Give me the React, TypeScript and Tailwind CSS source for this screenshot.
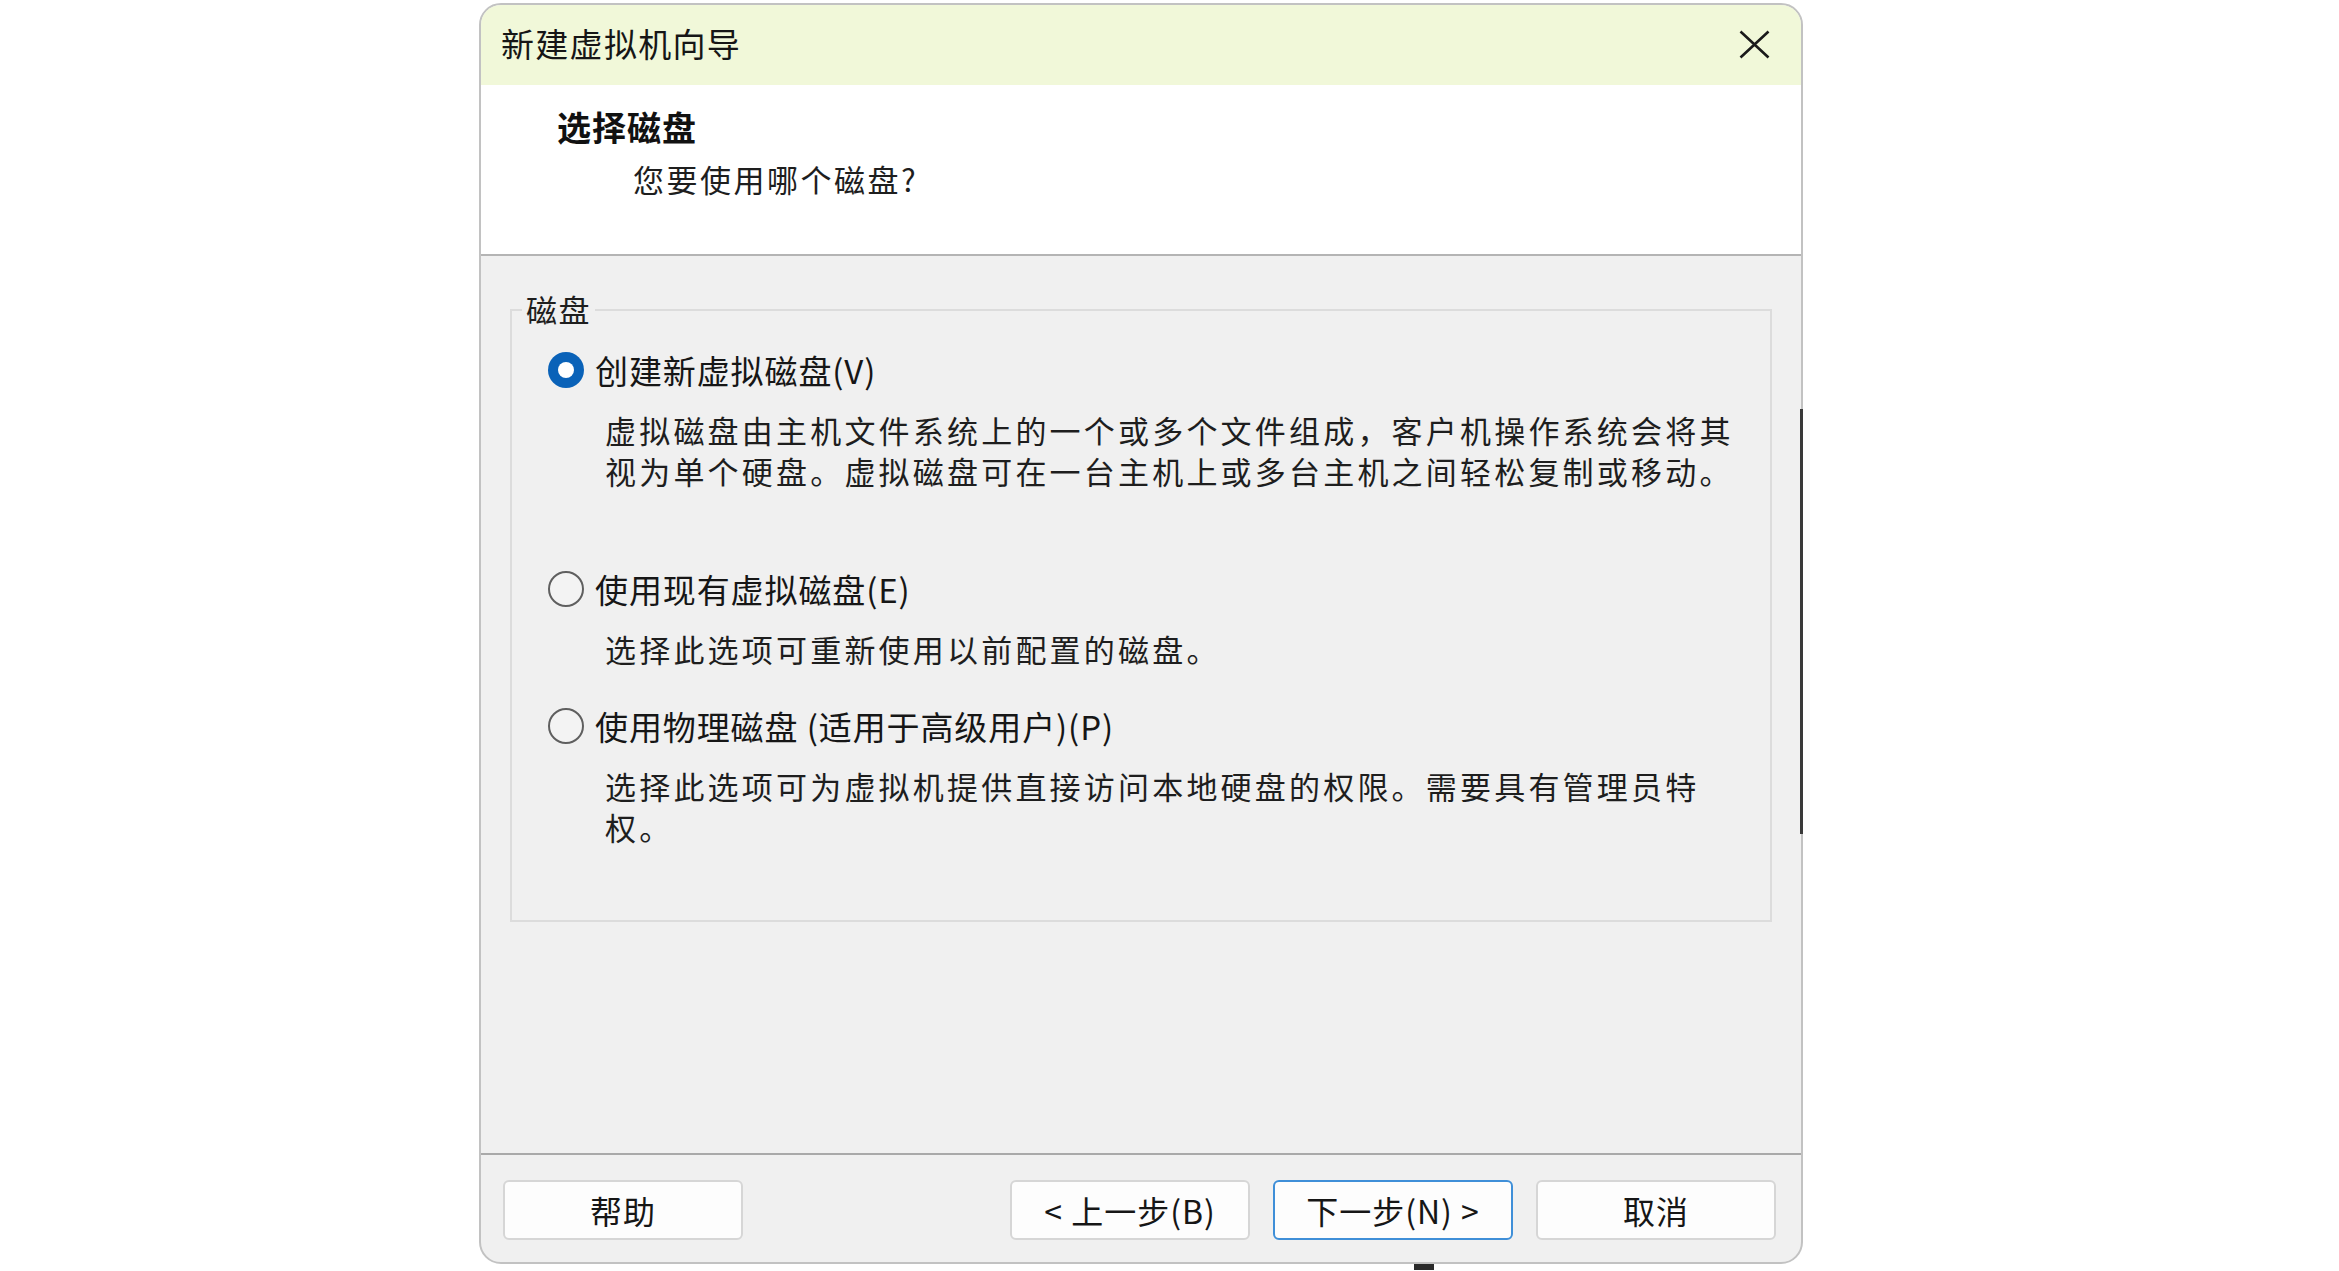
import React from "react";

const FONT = { fontFamily: '"Noto Sans CJK SC", "Noto Sans", sans-serif' };

function Radio({ checked }: { checked?: boolean }) {
  if (checked) {
    return (
      <div className="w-[36px] h-[36px] rounded-full bg-[#0a62b8] flex items-center justify-center shrink-0">
        <div className="w-[16px] h-[16px] rounded-full bg-white" />
      </div>
    );
  }
  return <div className="w-[36px] h-[36px] rounded-full border-2 border-[#5f5f5f] bg-[#f3f3f3] shrink-0" />;
}

function Option({
  checked,
  label,
  lines,
  className,
}: {
  checked?: boolean;
  label: string;
  lines: string[];
  className?: string;
}) {
  return (
    <div className={className}>
      <div className="flex items-center h-[44px]">
        <Radio checked={checked} />
        <span className="ml-[11px] text-[33px] leading-[44px] tracking-[0.9px] text-[#161616] whitespace-nowrap">
          {label}
        </span>
      </div>
      <div className="mt-[17px] ml-[57px] text-[31px] leading-[41px] tracking-[3.2px] text-[#1e1e1e] whitespace-nowrap">
        {lines.map((l) => (
          <div key={l}>{l}</div>
        ))}
      </div>
    </div>
  );
}

function Button({ children, primary }: { children: React.ReactNode; primary?: boolean }) {
  return (
    <div
      className={
        "w-[240px] h-[60px] rounded-[6px] bg-[#fdfdfd] flex items-center justify-center text-[32px] text-[#161616] tracking-[1px] " +
        (primary ? "border-2 border-[#3f8fd8]" : "border-2 border-[#d6d6d6]")
      }
    >
      {children}
    </div>
  );
}

export default function App() {
  return (
    <div className="relative w-full h-[1271px] bg-white overflow-hidden" style={FONT}>
      <div className="ml-[479px] mt-[3px] w-[1324px] h-[1261px] border-2 border-[#c2c2c2] rounded-[22px] overflow-hidden flex flex-col bg-[#f0f0f0]">
        {/* title bar */}
        <div className="h-[80px] shrink-0 bg-[#f1f8d9] flex items-center justify-between pl-[20px] pr-[31px]">
          <span className="mt-[-4px] text-[33px] tracking-[1.3px] text-[#161616] leading-none">新建虚拟机向导</span>
          <svg width="31" height="29" viewBox="0 0 31 29" className="mt-[-2px]">
            <path d="M1.5 1.5 L29.5 27.5 M29.5 1.5 L1.5 27.5" stroke="#1a1a1a" strokeWidth="2.6" fill="none" />
          </svg>
        </div>

        {/* header */}
        <div className="h-[169px] shrink-0 bg-white pt-[20px]">
          <div className="pl-[76px] text-[34px] font-bold leading-[44px] tracking-[1px] text-[#111]">选择磁盘</div>
          <div className="pl-[152px] mt-[8px] text-[31px] leading-[44px] tracking-[2.5px] text-[#1e1e1e]">
            您要使用哪个磁盘?
          </div>
        </div>
        <div className="h-[2px] shrink-0 bg-[#b4b4b4]" />

        {/* body */}
        <div className="flex-1 pt-[53px] px-[29px]">
          <div className="relative h-[613px] border-2 border-[#dcdcdc] pl-[36px] pt-[37px]">
            <span className="absolute left-[10px] top-[-24px] px-[4px] bg-[#f0f0f0] text-[31px] leading-[44px] tracking-[1.5px] text-[#1e1e1e]">
              磁盘
            </span>
            <Option
              checked
              label="创建新虚拟磁盘(V)"
              lines={[
                "虚拟磁盘由主机文件系统上的一个或多个文件组成，客户机操作系统会将其",
                "视为单个硬盘。虚拟磁盘可在一台主机上或多台主机之间轻松复制或移动。",
              ]}
            />
            <Option
              className="mt-[76px]"
              label="使用现有虚拟磁盘(E)"
              lines={["选择此选项可重新使用以前配置的磁盘。"]}
            />
            <Option
              className="mt-[35px]"
              label="使用物理磁盘 (适用于高级用户)(P)"
              lines={["选择此选项可为虚拟机提供直接访问本地硬盘的权限。需要具有管理员特", "权。"]}
            />
          </div>
        </div>

        {/* footer */}
        <div className="h-[2px] shrink-0 bg-[#a9a9a9]" />
        <div className="h-[107px] shrink-0 pt-[25px] pl-[22px] pr-[25px] flex">
          <Button>帮助</Button>
          <div className="flex-1" />
          <div className="flex gap-[23px]">
            <Button>&lt; 上一步(B)</Button>
            <Button primary>下一步(N) &gt;</Button>
            <Button>取消</Button>
          </div>
        </div>
      </div>

      {/* bits of the window behind */}
      <div className="absolute left-[1800px] top-[409px] w-[3px] h-[425px] bg-[#3a3a3a]" />
      <div className="absolute left-[1414px] top-[1264px] w-[20px] h-[6px] bg-[#2b2b2b]" />
    </div>
  );
}
